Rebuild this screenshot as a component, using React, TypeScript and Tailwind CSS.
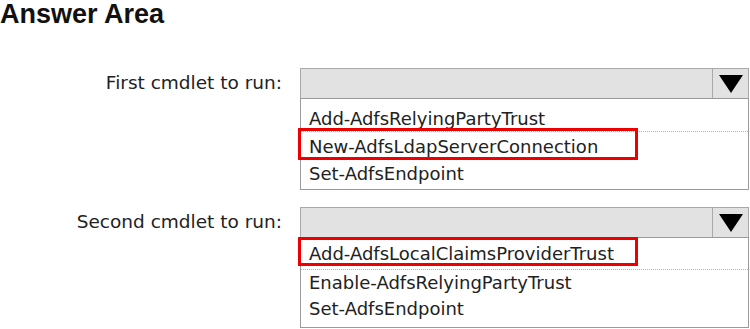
import React from "react";

type Row = { text: string; h: number; dotted?: boolean; mark?: { top: number; bottom: number } };
type Drop = { label: string; padTop: number; padBottom: number; rows: Row[] };

const font = { fontFamily: '"DejaVu Sans", Tahoma, Verdana, sans-serif' };

const drops: Drop[] = [
  {
    label: "First cmdlet to run:",
    padTop: 7,
    padBottom: 2,
    rows: [
      { text: "Add-AdfsRelyingPartyTrust", h: 26, dotted: true },
      { text: "New-AdfsLdapServerConnection", h: 28, mark: { top: -4, bottom: 0 } },
      { text: "Set-AdfsEndpoint", h: 27 },
    ],
  },
  {
    label: "Second cmdlet to run:",
    padTop: 0,
    padBottom: 5,
    rows: [
      { text: "Add-AdfsLocalClaimsProviderTrust", h: 32, dotted: true, mark: { top: -1, bottom: 3 } },
      { text: "Enable-AdfsRelyingPartyTrust", h: 25 },
      { text: "Set-AdfsEndpoint", h: 27 },
    ],
  },
];

function Dropdown({ d }: { d: Drop }) {
  return (
    <div className="flex items-start">
      <div className="w-[282px] h-[30px] flex items-center justify-end text-[18.5px] text-[#222]" style={font}>
        {d.label}
      </div>
      <div className="ml-[18px] w-[449px]">
        <div className="flex h-[30px] border border-b-0 border-[#a9a9a9] bg-[#e2e2e2]">
          <div className="flex-1" />
          <div className="w-[36px] border-l border-[#a9a9a9] flex items-center justify-center">
            <svg width="24" height="18" viewBox="0 0 24 18">
              <path d="M0 0h24L12 18z" fill="#000" />
            </svg>
          </div>
        </div>
        <div className="border border-[#9a9a9a] bg-white" style={{ paddingTop: d.padTop, paddingBottom: d.padBottom }}>
          {d.rows.map((r) => (
            <div
              key={r.text}
              className={`relative flex items-center pl-[8px] text-[18px] text-[#222] ${r.dotted ? "border-b border-dotted border-[#b5b5b5]" : ""}`}
              style={{ ...font, height: r.h }}
            >
              {r.text}
              {r.mark && (
                <span
                  className="absolute left-[-3px] w-[340px] border-[3px] border-[#ee0000] pointer-events-none"
                  style={{ top: r.mark.top, bottom: r.mark.bottom }}
                />
              )}
            </div>
          ))}
        </div>
      </div>
    </div>
  );
}

export default function App() {
  return (
    <div className="w-[750px] h-[329px] bg-white overflow-hidden">
      <h1 className="text-[27px] font-bold leading-[27px] pt-[1px] text-[#111]" style={{ fontFamily: '"Liberation Sans", Arial, sans-serif' }}>
        Answer Area
      </h1>
      <div className="flex flex-col gap-[17px] mt-[40px]">
        {drops.map((d) => (
          <Dropdown key={d.label} d={d} />
        ))}
      </div>
    </div>
  );
}
